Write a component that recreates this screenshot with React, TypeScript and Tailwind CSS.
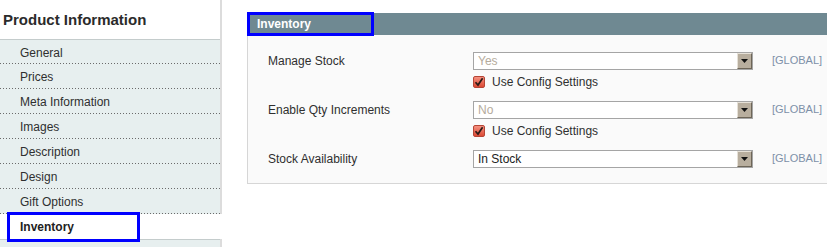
import React from 'react';

const tabs = ['General', 'Prices', 'Meta Information', 'Images', 'Description', 'Design', 'Gift Options'];

function Dots() {
    return <div className="h-px w-full bg-[repeating-linear-gradient(to_right,#6b6b6b_0_1px,transparent_1px_3px)]"></div>;
}

function Select({ value, disabled }: { value: string; disabled?: boolean }) {
    return (
        <div className="flex h-[18px] w-[280px] items-stretch border border-[#a5a5a5] bg-white">
            <span className={`flex-1 pl-[4px] text-[12px] leading-[16px] ${disabled ? 'text-[#b5ab9c]' : 'text-[#222]'}`}>{value}</span>
            <span className="flex w-[15px] items-center justify-center border-t border-l border-[#e6e1d8] border-r border-b border-r-[#6d6557] border-b-[#6d6557] bg-[#b8ae9e]">
                <svg width="7" height="4" viewBox="0 0 7 4"><path d="M0 0h7L3.5 4z" fill="#111" /></svg>
            </span>
        </div>
    );
}

function ConfigCheck() {
    return (
        <div className="mt-[6px] flex h-[12px] items-center gap-[7px]">
            <span className="flex h-[12px] w-[12px] items-center justify-center rounded-[2px] border border-[#b54535] bg-[linear-gradient(#f59080,#dc4a35)]">
                <svg width="10" height="10" viewBox="0 0 10 10"><path d="M1.5 5.2 4 8 8.6 1.2" fill="none" stroke="#2a1a16" strokeWidth="1.7" /></svg>
            </span>
            <span className="text-[12px] text-[#2f2f2f]">Use Config Settings</span>
        </div>
    );
}

function Row({ label, value, disabled, check, last }: { label: string; value: string; disabled?: boolean; check?: boolean; last?: boolean }) {
    return (
        <div className={`flex items-start ${last ? '' : 'mb-[13px]'}`}>
            <div className="w-[205px] text-[12px] leading-[18px] text-[#2f2f2f]">{label}</div>
            <div className="flex flex-col">
                <Select value={value} disabled={disabled} />
                {check && <ConfigCheck />}
            </div>
            <div className="ml-[19px] text-[11px] leading-[16px] text-[#7d90a8]">[GLOBAL]</div>
        </div>
    );
}

export default function App() {
    return (
        <div className="flex h-[247px] w-[827px] overflow-hidden bg-white font-['Liberation_Sans',Arial,sans-serif]">
            {/* Sidebar */}
            <div className="w-[222px] shrink-0 border-r-[2px] border-[#dcdcdc]">
                <div className="flex h-[39px] items-center pl-[3px] pt-[1px] text-[15px] font-bold text-[#2b2b2b]">
                    Product Information
                </div>
                <ul className="border-t border-[#c4cccc] bg-[#e7efef]">
                    {tabs.map((t, i) => (
                        <li key={t} className={`flex flex-col ${i === 0 ? 'h-[24px]' : 'h-[25px]'}`}>
                            <span className="flex flex-1 items-center pl-[20px] pt-[2px] text-[12px] text-[#2f2f2f]">{t}</span>
                            <Dots />
                        </li>
                    ))}
                    <li className="relative -mr-[2px] flex h-[25px] items-center bg-white pl-[20px] pt-[1px] text-[12px] font-bold text-[#222]">
                        Inventory
                        <span className="absolute left-[7px] top-[-2px] h-[30px] w-[133px] border-[3px] border-[#0000ff]"></span>
                    </li>
                </ul>
                <div className="h-[10px] border-t border-[#c4cccc] bg-[#e7efef]"></div>
            </div>

            {/* Main panel */}
            <div className="ml-[25px] mt-[13px] flex-1">
                <div className="relative flex h-[22px] items-center bg-[#6f8992] pl-[10px] text-[12px] font-bold text-white">
                    Inventory
                    <span className="absolute left-0 top-[-1px] h-[24px] w-[127px] border-[3px] border-[#0000ff]"></span>
                </div>
                <div className="border-l border-b border-[#d6d6d6] bg-[#fafafa] pl-[20px] pt-[17px] pb-[15px]">
                    <Row label="Manage Stock" value="Yes" disabled check />
                    <Row label="Enable Qty Increments" value="No" disabled check />
                    <Row label="Stock Availability" value="In Stock" last />
                </div>
            </div>
        </div>
    );
}
